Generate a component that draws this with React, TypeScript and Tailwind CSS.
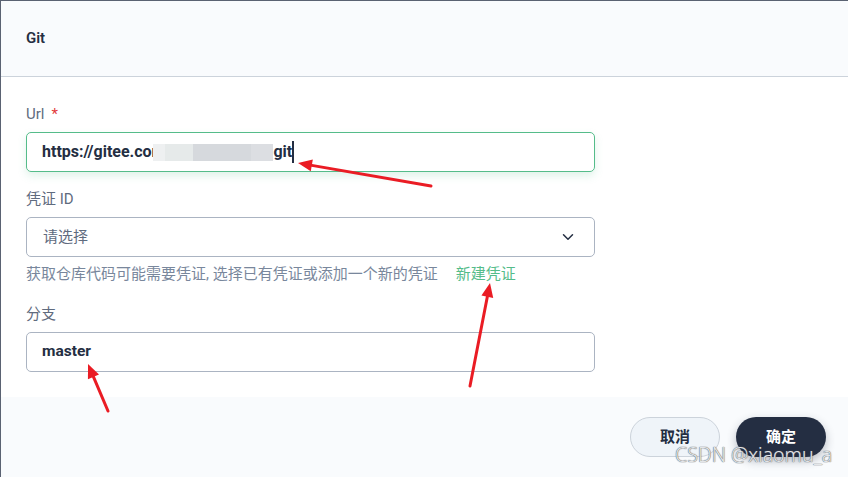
import React from "react";
import { ChevronDown } from "lucide-react";

const font = { fontFamily: "Roboto, 'Noto Sans CJK SC', sans-serif" };

function Label({ text, required }: { text: string; required?: boolean }) {
  return (
    <div className="flex h-[20px] items-center text-[15px] text-[#5f6b7e]">
      {text}
      {required ? <span className="ml-[7px] text-[#e23a3a]">*</span> : null}
    </div>
  );
}

function Arrow({ x1, y1, x2, y2 }: { x1: number; y1: number; x2: number; y2: number }) {
  const a = Math.atan2(y2 - y1, x2 - x1);
  const len = 14;
  const w = 6;
  const bx = x2 - Math.cos(a) * len;
  const by = y2 - Math.sin(a) * len;
  const px = -Math.sin(a) * w;
  const py = Math.cos(a) * w;
  return (
    <g>
      <line x1={x1} y1={y1} x2={bx} y2={by} stroke="#ea1c24" strokeWidth={3} strokeLinecap="round" />
      <polygon points={`${x2},${y2} ${bx + px},${by + py} ${bx - px},${by - py}`} fill="#ea1c24" />
    </g>
  );
}

export default function App() {
  return (
    <div className="relative h-[477px] w-[848px] overflow-hidden bg-white" style={font}>
      <div className="flex h-full flex-col border-l border-t border-[#5a6272]">
        <div className="flex h-[76px] shrink-0 items-center border-b border-[#ccd3db] bg-[#f9fbfd] px-[25px] pb-[1px]">
          <span className="text-[15px] font-semibold text-[#242e42]">Git</span>
        </div>

        <div className="flex h-[320px] shrink-0 flex-col px-[25px] pt-[27px]">
          <Label text="Url" required />
          <div className="mt-[8px] flex h-[40px] w-[569px] items-center rounded-[5px] border border-[#55bc8a] px-[15px] shadow-[0_4px_8px_rgba(85,188,138,0.18)]">
            <span className="text-[16px] font-bold text-[#242e42]">https://gitee.cor</span>
            <span className="-ml-[4px] flex h-[17px]">
              <span className="h-full w-[12px] bg-[#eef0f1]" />
              <span className="h-full w-[28px] bg-[#e6eaea]" />
              <span className="h-full w-[58px] bg-[#d6d9dd]" />
              <span className="h-full w-[22px] bg-[#dcdee2]" />
            </span>
            <span className="text-[16px] font-bold text-[#242e42]">git</span>
            <span className="h-[22px] w-[2px] bg-[#242e42]" />
          </div>

          <div className="mt-[17px]">
            <Label text="凭证 ID" />
          </div>
          <div className="mt-[8px] flex h-[40px] w-[569px] items-center justify-between rounded-[5px] border border-[#abb4c2] pl-[16px] pr-[17px]">
            <span className="text-[15px] text-[#5f6b7e]">请选择</span>
            <ChevronDown className="h-[18px] w-[18px] text-[#242e42]" strokeWidth={2} />
          </div>
          <div className="mt-[7px] flex h-[20px] items-center text-[15px] text-[#79879c]">
            获取仓库代码可能需要凭证, 选择已有凭证或添加一个新的凭证
            <span className="ml-[18px] text-[#55bc8a]">新建凭证</span>
          </div>

          <div className="mt-[20px]">
            <Label text="分支" />
          </div>
          <div className="mt-[8px] flex h-[40px] w-[569px] items-center rounded-[5px] border border-[#abb4c2] px-[15px]">
            <span className="text-[15.5px] font-bold text-[#242e42]">master</span>
          </div>
        </div>

        <div className="flex flex-1 items-start justify-end gap-[16px] bg-[#f9fbfd] pr-[22px] pt-[20px]">
          <button
            type="button"
            className="h-[40px] w-[90px] rounded-full border border-[#ccd3db] bg-[#eff4f9] text-[15px] font-bold text-[#242e42]"
          >
            取消
          </button>
          <button
            type="button"
            className="h-[40px] w-[90px] rounded-full bg-[#242e42] text-[15px] font-bold text-white shadow-[0_4px_10px_rgba(36,46,66,0.3)]"
          >
            确定
          </button>
        </div>
      </div>

      <svg className="pointer-events-none absolute left-0 top-0" width={848} height={477}>
        <Arrow x1={431} y1={186} x2={298} y2={163} />
        <Arrow x1={470} y1={386} x2={490} y2={283} />
        <Arrow x1={108} y1={411} x2={88} y2={364} />
      </svg>

      <div
        className="absolute left-[675px] top-[442px] text-[19.5px] font-light leading-[26px] text-[#e4e6e8]"
        style={{ fontFamily: "'Noto Sans', sans-serif", textShadow: "0 0 1px #5a5e66, 0 0 1px #5a5e66" }}
      >
        CSDN @xiaomu_a
      </div>
    </div>
  );
}
